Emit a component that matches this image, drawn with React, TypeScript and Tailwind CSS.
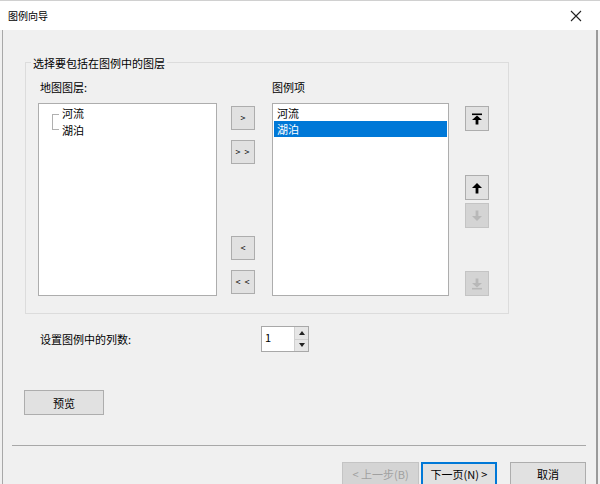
import React from "react";

const Btn = ({ children, disabled, className = "" }: { children: React.ReactNode; disabled?: boolean; className?: string }) => (
  <div
    className={
      "flex items-center justify-center border " +
      (disabled ? "bg-[#d4d4d4] border-[#c4c4c4] text-[#9c9c9c] " : "bg-[#e1e1e1] border-[#adadad] text-black ") +
      className
    }
  >
    {children}
  </div>
);

const Arrow = ({ kind, color }: { kind: "top" | "up" | "down" | "bottom"; color: string }) => {
  const up = kind === "top" || kind === "up";
  const bar = kind === "top" || kind === "bottom";
  return (
    <svg width="12" height="12" viewBox="0 0 12 12" style={{ transform: up ? undefined : "scaleY(-1)" }}>
      {bar && <rect x="1" y="0.5" width="10" height="1.6" fill={color} />}
      <polygon points={bar ? "6,2.5 11,7 1,7" : "6,1 11,6 1,6"} fill={color} />
      <rect x="4.6" y={bar ? 6.5 : 5.5} width="2.8" height={bar ? 5 : 6} fill={color} />
    </svg>
  );
};

export default function App() {
  return (
    <div className="w-[600px] h-[484px] overflow-hidden bg-[#f0f0f0] flex flex-col font-['Noto_Sans_CJK_SC',sans-serif] text-[11px] leading-[16px] text-black">
      {/* title bar */}
      <div className="h-[30px] shrink-0 bg-white border-t border-[#d0d0d0] flex items-center justify-between pl-[8px] pr-[18px]">
        <span className="text-[10px]">图例向导</span>
        <svg width="12" height="12" viewBox="0 0 12 12">
          <path d="M1 1 L11 11 M11 1 L1 11" stroke="#222" strokeWidth="1.1" />
        </svg>
      </div>

      {/* body */}
      <div className="flex-1 mx-[2px] border-l border-r-2 border-l-[#a8a8a8] border-r-[#9a9a9a] flex flex-col">
        {/* group box */}
        <div className="relative ml-[22px] mt-[32px] w-[484px] h-[252px] border border-[#dcdcdc]">
          <span className="absolute top-[-8px] left-[5px] px-[2px] bg-[#f0f0f0]">选择要包括在图例中的图层</span>
          <div className="flex pt-[16px] pl-[12px]">
            {/* map layers */}
            <div className="w-[179px] flex flex-col">
              <div className="pl-[2px]">地图图层:</div>
              <div className="mt-[8px] h-[193px] bg-white border border-[#adadad] relative pt-[1px] pl-[23px]">
                <div className="absolute left-[13px] top-[10px] w-[7px] h-[16px] border-l border-t border-b border-[#b0b0b0]" />
                <div className="h-[17px]">河流</div>
                <div className="h-[17px]">湖泊</div>
              </div>
            </div>

            {/* move buttons */}
            <div className="ml-[14px] w-[24px] flex flex-col pt-[27px] text-[9px]">
              <Btn className="h-[24px]">&gt;</Btn>
              <Btn className="h-[24px] mt-[10px] tracking-[1px]">&gt; &gt;</Btn>
              <Btn className="h-[24px] mt-[72px]">&lt;</Btn>
              <Btn className="h-[24px] mt-[10px] tracking-[1px]">&lt; &lt;</Btn>
            </div>

            {/* legend items */}
            <div className="ml-[17px] w-[177px] flex flex-col">
              <div>图例项</div>
              <div className="mt-[8px] h-[193px] bg-white border border-[#adadad] p-[1px]">
                <div className="h-[16px] pl-[3px]">河流</div>
                <div className="h-[16px] pl-[3px] bg-[#0078d7] text-white">湖泊</div>
              </div>
            </div>

            {/* order buttons */}
            <div className="ml-[16px] w-[24px] flex flex-col pt-[27px]">
              <Btn className="h-[25px]"><Arrow kind="top" color="#000" /></Btn>
              <Btn className="h-[25px] mt-[44px]"><Arrow kind="up" color="#000" /></Btn>
              <Btn disabled className="h-[25px] mt-[3px]"><Arrow kind="down" color="#b8b8b8" /></Btn>
              <Btn disabled className="h-[25px] mt-[43px]"><Arrow kind="bottom" color="#b8b8b8" /></Btn>
            </div>
          </div>
        </div>

        {/* columns row */}
        <div className="mt-[12px] flex items-center h-[26px]">
          <span className="ml-[37px] w-[221px]">设置图例中的列数:</span>
          <div className="w-[48px] h-[26px] flex bg-white border border-[#a8a8a8]">
            <div className="flex-1 pl-[3px] pt-[2px]">1</div>
            <div className="w-[14px] flex flex-col border-l border-[#d0d0d0]">
              <div className="flex-1 bg-[#e6e6e6] border-b border-[#d0d0d0] flex items-center justify-center">
                <svg width="6" height="4" viewBox="0 0 6 4"><polygon points="3,0 6,4 0,4" fill="#222" /></svg>
              </div>
              <div className="flex-1 bg-[#e6e6e6] flex items-center justify-center">
                <svg width="6" height="4" viewBox="0 0 6 4"><polygon points="0,0 6,0 3,4" fill="#222" /></svg>
              </div>
            </div>
          </div>
        </div>

        {/* preview */}
        <Btn className="ml-[21px] mt-[38px] w-[80px] h-[25px]">预览</Btn>

        {/* separator */}
        <div className="ml-[9px] mt-[30px] w-[574px] border-t border-[#a8a8a8]" />

        {/* bottom buttons */}
        <div className="flex mt-[16px] ml-[339px]">
          <Btn disabled className="w-[77px] h-[24px] text-[#a0a0a0]">&lt; 上一步(B)</Btn>
          <div className="ml-[2px] w-[76px] h-[24px] flex items-center justify-center bg-[#e1e1e1] border-2 border-[#0078d7]">下一页(N) &gt;</div>
          <Btn className="ml-[13px] w-[76px] h-[24px]">取消</Btn>
        </div>
      </div>
    </div>
  );
}
